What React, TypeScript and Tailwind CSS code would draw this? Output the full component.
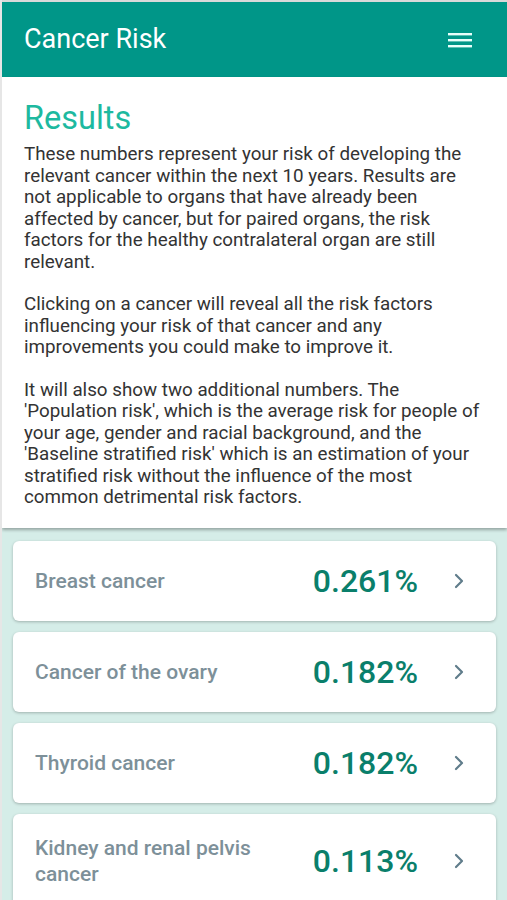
import React from 'react';

type Risk = { name: string; value: string };

const risks: Risk[] = [
  { name: 'Breast cancer', value: '0.261%' },
  { name: 'Cancer of the ovary', value: '0.182%' },
  { name: 'Thyroid cancer', value: '0.182%' },
  { name: 'Kidney and renal pelvis cancer', value: '0.113%' },
];

function MenuIcon() {
  return (
    <svg width="26" height="20" viewBox="0 0 26 20" fill="none">
      <rect x="1" y="3" width="24" height="2.4" fill="#e8fffb" />
      <rect x="1" y="9" width="24" height="2.4" fill="#e8fffb" />
      <rect x="1" y="15" width="24" height="2.4" fill="#e8fffb" />
    </svg>
  );
}

function Chevron() {
  return (
    <svg width="14" height="18" viewBox="0 0 14 18" fill="none">
      <path d="M4 3l6 6-6 6" stroke="#607d8b" strokeWidth="2.2" strokeLinecap="round" strokeLinejoin="round" />
    </svg>
  );
}

function RiskCard({ name, value }: Risk) {
  return (
    <div className="flex items-center min-h-[80px] py-[21px] pl-[22px] pr-[30px] bg-white rounded-md shadow-[0_1px_3px_rgba(0,0,0,0.25)]">
      <div className="flex-1 text-[21px] leading-[26px] font-medium text-[#7d9099] pr-4">{name}</div>
      <div className="text-[32px] leading-[36px] font-medium text-[#0a7f6b] mr-[34px]">{value}</div>
      <Chevron />
    </div>
  );
}

export default function App() {
  return (
    <div className="w-[507px] h-[900px] overflow-hidden bg-[#d5ede8] border-l-2 border-[#e6e6e6] font-['Roboto',sans-serif]">
      <header className="h-[77px] bg-[#009688] border-t-2 border-[#d9d9d9] flex items-center justify-between pl-[22px] pr-[34px]">
        <h1 className="text-[27px] text-white">Cancer Risk</h1>
        <MenuIcon />
      </header>

      <section className="bg-white px-[22px] pt-[21px] pb-[19px] shadow-[0_2px_3px_rgba(0,0,0,0.3)] relative">
        <h2 className="text-[32.5px] leading-[40px] text-[#1db9a0] mb-[6px]">Results</h2>
        <div className="text-[18.8px] leading-[21.5px] text-[#333] space-y-[21px]">
          <p>
            These numbers represent your risk of developing the relevant cancer within the next 10 years. Results are not applicable to organs that have already been affected by cancer, but for paired organs, the risk factors for the healthy contralateral organ are still relevant.
          </p>
          <p>
            Clicking on a cancer will reveal all the risk factors influencing your risk of that cancer and any improvements you could make to improve it.
          </p>
          <p>
            It will also show two additional numbers. The 'Population risk', which is the average risk for people of your age, gender and racial background, and the 'Baseline stratified risk' which is an estimation of your stratified risk without the influence of the most common detrimental risk factors.
          </p>
        </div>
      </section>

      <div className="flex flex-col gap-[11px] px-[11px] pt-[13px]">
        {risks.map((r) => (
          <RiskCard key={r.name} {...r} />
        ))}
      </div>
    </div>
  );
}
